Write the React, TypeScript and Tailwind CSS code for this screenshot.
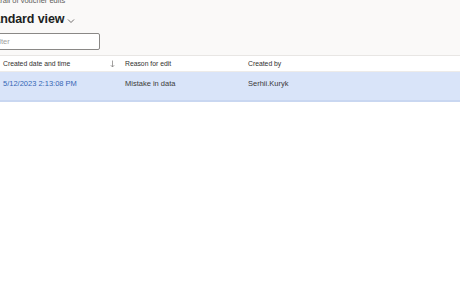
export default function App() {
  return (
    <div className="h-[295px] w-[460px] overflow-hidden bg-white font-['Liberation_Sans',Arial,sans-serif] text-[#323130]">
      <div className="flex h-[56px] flex-col items-start border-b border-[#e8e6e4] bg-[#faf9f8]">
        <div className="-mt-[4px] -ml-[21px] text-[7.5px] leading-[10px] text-[#605e5c]">
          Audit trail of voucher edits
        </div>
        <div className="mt-[5px] -ml-[19px] flex items-center gap-[3px]">
          <span className="text-[12.5px] font-bold leading-[16px] tracking-[-0.1px] text-[#201f1e]">
            Standard view
          </span>
          <svg width="8" height="6" viewBox="0 0 8 6" className="mt-[3px]">
            <path d="M1 1.5 L4 4.5 L7 1.5" fill="none" stroke="#605e5c" strokeWidth="0.9" />
          </svg>
        </div>
        <div className="mt-[6px] -ml-[14px] flex h-[17px] w-[114px] items-center rounded-[2px] border border-[#8a8886] bg-white px-[6px]">
          <span className="text-[7.5px] text-[#a19f9d]">Filter</span>
        </div>
      </div>

      <div className="flex h-[16px] items-center border-b border-[#edebe9] bg-white pt-[1px] text-[6.8px] text-[#323130]">
        <div className="flex w-[122px] items-center justify-between pl-[3px] pr-[7px]">
          <span>Created date and time</span>
          <svg width="5" height="8" viewBox="0 0 5 8">
            <path d="M2.5 0.5 V7 M0.8 5.2 L2.5 7 L4.2 5.2" fill="none" stroke="#8a8886" strokeWidth="0.8" />
          </svg>
        </div>
        <div className="w-[123px] pl-[3px]">Reason for edit</div>
        <div className="pl-[3px]">Created by</div>
      </div>

      <div className="flex h-[30px] items-start border-b-2 border-[#c9d7f1] bg-[#d9e4f9] pt-[6px] text-[7.5px]">
        <div className="w-[122px] pl-[3px] text-[#3566b5]">5/12/2023 2:13:08 PM</div>
        <div className="w-[123px] pl-[3px] text-[#3b3a39]">Mistake in data</div>
        <div className="pl-[3px] text-[#3b3a39]">Serhii.Kuryk</div>
      </div>
    </div>
  );
}
